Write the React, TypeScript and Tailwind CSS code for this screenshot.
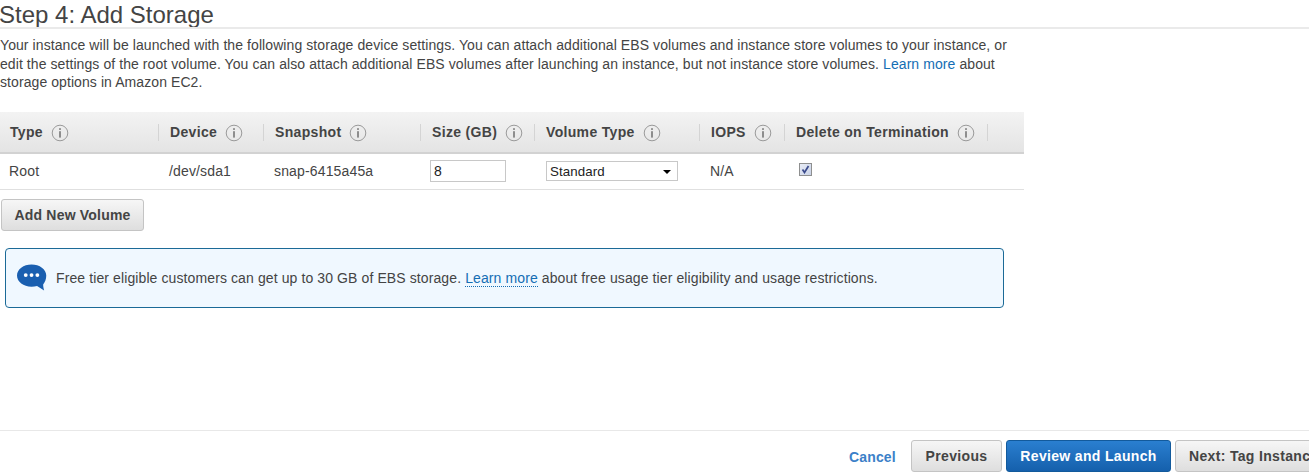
import React from 'react';

const font = "font-['Liberation_Sans',Arial,sans-serif]";

function InfoIcon() {
  return (
    <svg width="18" height="18" viewBox="0 0 18 18" className="shrink-0">
      <circle cx="9" cy="9" r="7.8" fill="none" stroke="#9a9a9a" strokeWidth="1" />
      <rect x="8.2" y="4.2" width="1.6" height="1.7" fill="#777" />
      <rect x="8.2" y="7.2" width="1.6" height="6.4" fill="#777" />
    </svg>
  );
}

function HeaderCell({ label, width }: { label: string; width: string }) {
  return (
    <div className={`${width} h-[17px] flex items-center pl-[11px] gap-[8px] border-r border-[#d4d4d4] shrink-0`}>
      <span className="text-[14px] font-bold tracking-[0.33px] text-[#444] whitespace-nowrap">{label}</span>
      <InfoIcon />
    </div>
  );
}

function ChatIcon() {
  return (
    <svg width="31" height="28" viewBox="0 0 32 28" className="shrink-0">
      <path
        d="M15 0C6.700 0 0 4.900 0 11.500S6.700 23 15 23c2 0 4-.3 5.700-.8L28 27c-.4-1.800-1-4-1-6.300 2-2.400 3.200-5.500 3.200-9.200C30.200 4.900 23.300 0 15 0z"
        fill="#1a5fb0"
      />
      <circle cx="9" cy="11" r="2" fill="#fff" />
      <circle cx="15" cy="11" r="2" fill="#fff" />
      <circle cx="21" cy="11" r="2" fill="#fff" />
    </svg>
  );
}

export default function App() {
  return (
    <div className={`${font} w-[1309px] h-[473px] overflow-hidden bg-white text-[#444] flex flex-col`}>
      <div className="h-[29px] border-b-2 border-[#eaeaea] shrink-0 overflow-hidden">
        <h1 className="text-[24px] leading-[29px] text-[#444] -ml-[1px]">Step 4: Add Storage</h1>
      </div>

      <p className="w-[1012px] mt-[7px] text-[14px] leading-[18.500px] tracking-[0.08px] text-[#444]">
        Your instance will be launched with the following storage device settings. You can attach additional EBS
        volumes and instance store volumes to your instance, or edit the settings of the root volume. You can also
        attach additional EBS volumes after launching an instance, but not instance store volumes.{' '}
        <a className="text-[#146eb4]">Learn more</a> about storage options in Amazon EC2.
      </p>

      <div className="w-[1024px] mt-[20px] shrink-0">
        <div className="h-[42px] flex items-center pt-[2px] bg-gradient-to-b from-[#f3f3f3] to-[#e4e4e4] border-b-2 border-[#d2d2d2]">
          <HeaderCell label="Type" width="w-[159px] !pl-[10px]" />
          <HeaderCell label="Device" width="w-[105px]" />
          <HeaderCell label="Snapshot" width="w-[157px]" />
          <HeaderCell label="Size (GB)" width="w-[114px]" />
          <HeaderCell label="Volume Type" width="w-[165px]" />
          <HeaderCell label="IOPS" width="w-[85px]" />
          <HeaderCell label="Delete on Termination" width="w-[203px]" />
        </div>
        <div className="h-[36px] flex items-center text-[14px] tracking-[0.15px] text-[#444] border-b border-[#e0e0e0]">
          <div className="w-[169px] pl-[9px]">Root</div>
          <div className="w-[105px]">/dev/sda1</div>
          <div className="w-[156px]">snap-6415a45a</div>
          <div className="w-[116px]">
            <div className="w-[76px] h-[22px] border border-[#c8c8c8] pl-[3px] leading-[20px] text-[#222]">8</div>
          </div>
          <div className="w-[164px]">
            <div className="w-[132px] h-[20px] border border-[#c8c8c8] pl-[3px] pr-[6px] pt-[1px] flex items-center justify-between text-[13.300px] tracking-[0.1px] text-[#222]">
              <span>Standard</span>
              <span className="w-0 h-0 border-x-[4px] border-x-transparent border-t-[4px] border-t-black" />
            </div>
          </div>
          <div className="w-[89px]">N/A</div>
          <div className="w-[13px] h-[13px] -mt-[3px] border border-[#8e8f8f] bg-gradient-to-br from-[#e8ecf6] to-[#c9d2e6] flex items-center justify-center">
            <svg width="9" height="9" viewBox="0 0 9 9">
              <path d="M1.500 4.500 L3.500 7.500 L7.500 1" fill="none" stroke="#3a4a8c" strokeWidth="1.700" />
            </svg>
          </div>
        </div>
      </div>

      <button className="ml-[1px] mt-[9px] w-[143px] h-[32px] pt-[1px] shrink-0 rounded-[3px] border border-[#c4c4c4] bg-gradient-to-b from-[#f6f6f6] to-[#dedede] text-[14px] font-bold tracking-[0.2px] text-[#444]">
        Add New Volume
      </button>

      <div className="ml-[5px] mt-[17px] w-[999px] h-[60px] shrink-0 rounded-[4px] border border-[#1b6a97] bg-[#f0f8ff] flex items-center pl-[11px] gap-[8px] text-[14px] tracking-[0.105px] text-[#444]">
        <ChatIcon />
        <span className="mt-[2px]">
          Free tier eligible customers can get up to 30 GB of EBS storage.{' '}
          <a className="text-[#146eb4] border-b border-dotted border-[#146eb4]">Learn more</a> about free usage tier
          eligibility and usage restrictions.
        </span>
      </div>

      <div className="mt-[122px] border-t border-[#e8e8e8] shrink-0 h-[43px] flex items-start pt-[9px] pl-[849px] w-[1309px]">
        <a className="w-[62px] shrink-0 mt-[7px] text-[14px] font-bold tracking-[0.15px] text-[#3b80c8]">Cancel</a>
        <button className="w-[91px] h-[32px] pt-[1px] shrink-0 rounded-[3px] border border-[#c4c4c4] bg-gradient-to-b from-[#f6f6f6] to-[#dedede] text-[14px] font-bold tracking-[0.33px] text-[#444]">
          Previous
        </button>
        <button className="ml-[4px] w-[165px] h-[32px] pt-[1px] shrink-0 rounded-[3px] border border-[#125a9c] bg-gradient-to-b from-[#2a7fd0] to-[#1560ac] text-[14px] font-bold tracking-[0.33px] text-white">
          Review and Launch
        </button>
        <button className="ml-[4px] pl-[13px] pr-[13px] pt-[1px] h-[32px] shrink-0 rounded-[3px] border border-[#c4c4c4] bg-gradient-to-b from-[#f6f6f6] to-[#dedede] text-[14px] font-bold tracking-[0.33px] text-[#444] whitespace-nowrap">
          Next: Tag Instance
        </button>
      </div>
    </div>
  );
}
